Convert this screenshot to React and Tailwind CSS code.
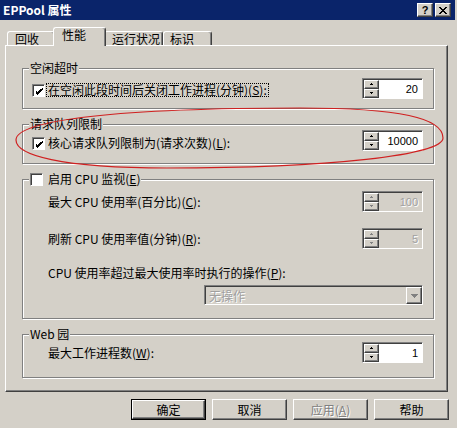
import React from 'react';

const U = ({ children }) => <span className="underline">{children}</span>;

const Check = ({ checked, className = '' }) => (
  <div
    className={`w-[13px] h-[13px] shrink-0 bg-white border border-t-[#808080] border-l-[#808080] border-r-white border-b-white shadow-[inset_1px_1px_0_#404040] flex items-center justify-center ${className}`}
  >
    {checked && (
      <svg width="7" height="7" viewBox="0 0 7 7" shapeRendering="crispEdges" className="ml-[1px] mt-[1px]">
        <path d="M6 0h1v2h-1v1h-1v1h-1v1h-1v1h-1v1h-1v-1h-1v-1h-1v-3h1v1h1v1h1v-1h1v-1h1v-1h1z" fill="#000" />
      </svg>
    )}
  </div>
);

const Arrow = ({ up, disabled }) => (
  <svg width="5" height="3" viewBox="0 0 5 3" shapeRendering="crispEdges">
    {up ? (
      <path d="M2 0h1v1h1v1h-3v-1h1z" fill={disabled ? '#808080' : '#000'} />
    ) : (
      <path d="M1 0h3v1h-1v1h-1v-1h-1z" fill={disabled ? '#808080' : '#000'} />
    )}
  </svg>
);

const SpinBtn = ({ up, disabled }) => (
  <div className="flex-1 flex items-center justify-center bg-[#d4d0c8] border border-t-white border-l-white border-r-[#404040] border-b-[#404040] shadow-[inset_-1px_-1px_0_#808080]">
    <Arrow up={up} disabled={disabled} />
  </div>
);

const Spin = ({ value, disabled }) => (
  <div className="w-[61px] h-[21px] shrink-0 flex border border-t-[#808080] border-l-[#808080] border-r-white border-b-white shadow-[inset_1px_1px_0_#404040] pt-[1px] pl-[1px]">
    <div className="w-[15px] flex flex-col">
      <SpinBtn up disabled={disabled} />
      <SpinBtn disabled={disabled} />
    </div>
    <div
      className={
        disabled
          ? "flex-1 flex items-center justify-end pr-[4px] font-['Liberation_Sans',sans-serif] text-[11px] bg-[#d4d0c8] text-[#a0a0a0] [text-shadow:1px_1px_0_#fff]"
          : "flex-1 flex items-center justify-end pr-[4px] font-['Liberation_Sans',sans-serif] text-[11px] bg-white text-black"
      }
    >
      {value}
    </div>
  </div>
);

const Group = ({ legend, className = '', children }) => (
  <div className={`w-[412px] flex flex-col border border-[#808080] shadow-[inset_1px_1px_0_#fff,1px_1px_0_#fff] ${className}`}>
    <div className="-mt-[8px] ml-[6px] px-[1px] bg-[#d4d0c8] self-start h-[14px] leading-[14px] flex items-center gap-[5px]">
      {legend}
    </div>
    {children}
  </div>
);

const Button = ({ children, primary, disabled }) =>
  primary ? (
    <div className="w-[75px] h-[21px] border border-black">
      <div className="w-full h-full flex items-center justify-center border border-t-white border-l-white border-r-[#404040] border-b-[#404040] shadow-[inset_-1px_-1px_0_#808080]">
        {children}
      </div>
    </div>
  ) : (
    <div
      className={
        disabled
          ? 'w-[75px] h-[21px] flex items-center justify-center border border-t-white border-l-white border-r-[#404040] border-b-[#404040] shadow-[inset_-1px_-1px_0_#808080] text-[#808080] [text-shadow:1px_1px_0_#fff]'
          : 'w-[75px] h-[21px] flex items-center justify-center border border-t-white border-l-white border-r-[#404040] border-b-[#404040] shadow-[inset_-1px_-1px_0_#808080]'
      }
    >
      {children}
    </div>
  );

export default function App() {
  return (
    <div className="relative w-[457px] h-[428px] overflow-hidden bg-[#d4d0c8] text-[12px] leading-[14px] text-black font-['Noto_Sans_CJK_SC',sans-serif] flex flex-col">
      {/* title bar */}
      <div className="h-[20px] mr-[2px] bg-[#0a246a] flex items-center pl-[3px] pr-[4px]">
        <span className="text-white font-bold">EPPool 属性</span>
        <div className="flex-1" />
        <div className="w-[16px] h-[14px] flex items-center justify-center bg-[#d4d0c8] border border-t-white border-l-white border-r-[#404040] border-b-[#404040] shadow-[inset_-1px_-1px_0_#808080] font-['Liberation_Sans',sans-serif] font-bold text-[11px] leading-none">
          ?
        </div>
        <div className="ml-[2px] w-[16px] h-[14px] flex items-center justify-center bg-[#d4d0c8] border border-t-white border-l-white border-r-[#404040] border-b-[#404040] shadow-[inset_-1px_-1px_0_#808080]">
          <svg width="8" height="7" viewBox="0 0 8 7" shapeRendering="crispEdges">
            <path d="M0 0h2l2 2.5L6 0h2L5 3.5 8 7H6L4 4.5 2 7H0l3-3.5z" fill="#000" />
          </svg>
        </div>
      </div>

      {/* tabs */}
      <div className="mt-[7px] h-[19px] flex items-end pl-[7px]">
        <div className="w-[48px] h-[15px] pl-[7px] border-l border-t border-r border-t-white border-l-white border-r-[#404040] shadow-[inset_-1px_0_0_#808080] rounded-t-[3px]">
          回收
        </div>
        <div className="relative z-10 -ml-[2px] w-[53px] h-[19px] pl-[8px] bg-[#d4d0c8] border-l border-t border-r border-t-white border-l-white border-r-[#404040] shadow-[inset_-1px_0_0_#808080] rounded-t-[3px]">
          性能
        </div>
        <div className="-ml-[2px] w-[59px] h-[15px] pl-[7px] border-l border-t border-r border-t-white border-l-white border-r-[#404040] shadow-[inset_-1px_0_0_#808080] rounded-t-[3px]">
          运行状况
        </div>
        <div className="w-[49px] h-[15px] pl-[6px] border-l border-t border-r border-t-white border-l-white border-r-[#404040] shadow-[inset_-1px_0_0_#808080] rounded-t-[3px]">
          标识
        </div>
      </div>

      {/* tab panel */}
      <div className="-mt-[1px] ml-[5px] w-[443px] h-[347px] shrink-0 bg-[#d4d0c8] border border-t-white border-l-white border-r-[#404040] border-b-[#404040] shadow-[inset_-1px_-1px_0_#808080] flex flex-col pl-[16px]">
        <Group legend="空闲超时" className="mt-[22px] h-[41px]">
          <div className="flex items-start mt-[3px] pl-[9px] pr-[10px]">
            <Check checked className="mt-[6px]" />
            <span className="ml-[1px] mt-[5px] px-[1px] border border-dotted border-black leading-[12px]">
              在空闲此段时间后关闭工作进程(分钟)(<U>S</U>):
            </span>
            <div className="flex-1" />
            <Spin value="20" />
          </div>
        </Group>

        <Group legend="请求队列限制" className="mt-[15px] h-[40px]">
          <div className="flex items-start -mt-[1px] pl-[9px] pr-[10px]">
            <Check checked className="mt-[7px]" />
            <span className="ml-[3px] mt-[6px]">
              核心请求队列限制为(请求次数)(<U>L</U>):
            </span>
            <div className="flex-1" />
            <Spin value="10000" />
          </div>
        </Group>

        <Group
          legend={
            <>
              <Check />
              <span>
                启用 CPU 监视(<U>E</U>)
              </span>
            </>
          }
          className="mt-[15px] h-[140px]"
        >
          <div className="flex items-center justify-between mt-[5px] pl-[25px] pr-[10px]">
            <span>
              最大 CPU 使用率(百分比)(<U>C</U>):
            </span>
            <Spin value="100" disabled />
          </div>
          <div className="flex items-center justify-between mt-[16px] pl-[25px] pr-[10px]">
            <span>
              刷新 CPU 使用率值(分钟)(<U>R</U>):
            </span>
            <Spin value="5" disabled />
          </div>
          <div className="mt-[17px] pl-[25px]">
            CPU 使用率超过最大使用率时执行的操作(<U>P</U>):
          </div>
          <div className="self-end mr-[10px] mt-[5px] w-[219px] h-[20px] flex border border-t-[#808080] border-l-[#808080] border-r-white border-b-white shadow-[inset_1px_1px_0_#404040] pt-[1px] pl-[1px]">
            <div className="flex-1 flex items-center pl-[3px] text-[#a0a0a0] [text-shadow:1px_1px_0_#fff]">无操作</div>
            <div className="w-[16px] flex items-center justify-center border border-t-white border-l-white border-r-[#404040] border-b-[#404040] shadow-[inset_-1px_-1px_0_#808080]">
              <svg width="7" height="4" viewBox="0 0 7 4" shapeRendering="crispEdges">
                <path d="M0 0h7v1h-1v1h-1v1h-1v1h-1v-1h-1v-1h-1v-1h-1z" fill="#808080" />
              </svg>
            </div>
          </div>
        </Group>

        <Group legend="Web 园" className="mt-[15px] h-[44px]">
          <div className="flex items-center justify-between mt-[1px] pl-[25px] pr-[10px]">
            <span>
              最大工作进程数(<U>W</U>):
            </span>
            <Spin value="1" />
          </div>
        </Group>
      </div>

      {/* dialog buttons */}
      <div className="mt-[7px] flex justify-end gap-[6px] pr-[8px]">
        <Button primary>确定</Button>
        <Button>取消</Button>
        <Button disabled>
          应用(<U>A</U>)
        </Button>
        <Button>帮助</Button>
      </div>

      {/* hand-drawn red ellipse */}
      <svg className="absolute left-0 top-0 pointer-events-none" width="457" height="428" viewBox="0 0 457 428">
        <path
          d="M16 140C16 120 120 108 300 108C400 108 443 118 443 138C443 155 330 168 167 168C60 168 16 155 16 140Z"
          fill="none"
          stroke="#d02020"
          strokeWidth="1.2"
        />
      </svg>
    </div>
  );
}
